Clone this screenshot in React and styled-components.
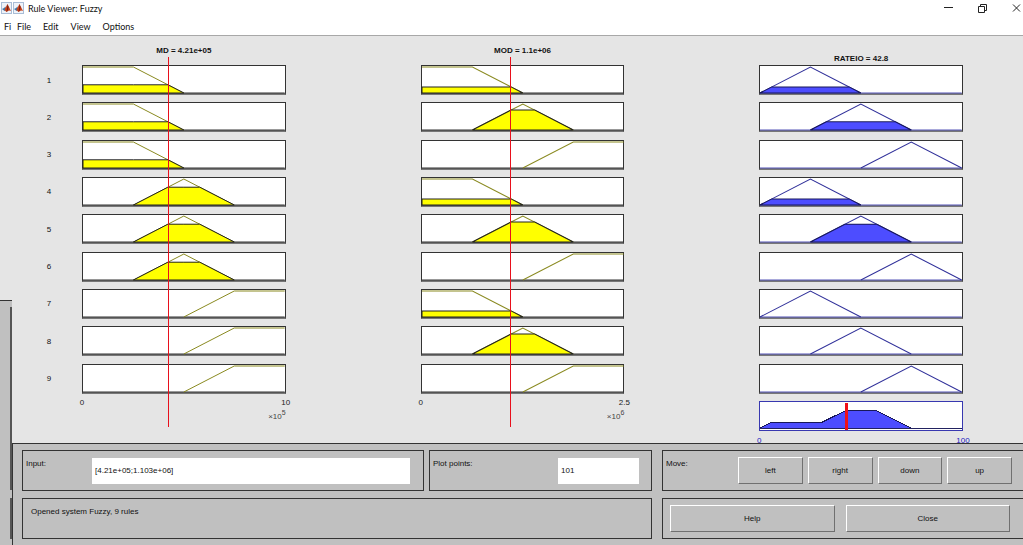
import React, { useState } from 'react';
import styled, { createGlobalStyle, css } from 'styled-components';

const GlobalStyle = createGlobalStyle`
  * {
    box-sizing: border-box;
  }
  body {
    margin: 0;
    overflow: hidden;
    background-color: #e5e5e5;
    font-family: "Liberation Sans", Arial, sans-serif;
    font-size: 8px;
    color: #111;
  }
  button,
  input {
    margin: 0;
    font: inherit;
    color: inherit;
  }
`;

const Desktop = styled.div`
  display: flex;
  height: 100vh;
  overflow: hidden;
`;

/* ---- window chrome ---- */

const WindowFrame = styled.div`
  display: flex;
  flex-direction: column;
  min-width: 0;
  background-color: #e5e5e5;
  ${props =>
    props.$behind
      ? css`
          flex: 0 0 12px;
          overflow: hidden;
        `
      : css`
          flex: 1;
        `}
`;

const TitleBar = styled.header`
  display: flex;
  align-items: center;
  flex-shrink: 0;
  height: 16px;
  padding-left: 1px;
  background-color: #fff;
  font-family: Lato, "Open Sans", sans-serif;
  font-size: 9px;
  svg {
    flex-shrink: 0;
  }
  h1 {
    flex: 1;
    margin: 0 0 0 4px;
    font-size: 9px;
    font-weight: 400;
    white-space: nowrap;
  }
`;

const WindowButtons = styled.div`
  display: flex;
  gap: 20px;
`;

const WindowButton = styled.button`
  display: flex;
  align-items: center;
  justify-content: center;
  width: 14px;
  height: 14px;
  padding: 0;
  border: 0;
  background: none;
`;

const MenuBar = styled.nav`
  display: flex;
  flex-shrink: 0;
  align-items: center;
  gap: 12px;
  height: 20px;
  padding: 2px 0 0 ${props => (props.$behind ? 4 : 5)}px;
  background-color: #fff;
  border-bottom: 1px solid #a8a8a8;
  font-family: Lato, "Open Sans", sans-serif;
  font-size: 9px;
`;

const MenuItem = styled.button`
  padding: 0;
  border: 0;
  background: none;
  white-space: nowrap;
`;

const BehindFigure = styled.div`
  flex: 1;
`;

const BehindPanel = styled.div`
  display: flex;
  flex-direction: column;
  gap: 8px;
  height: 245px;
  padding: 6px 0;
  background-color: #c0c0c0;
  border-top: 1px solid #333;
`;

const BehindBox = styled.div`
  height: ${props => props.$height}px;
  border-right: 2px solid #555;
`;

/* ---- figure ---- */

const Figure = styled.main`
  flex: 1;
  min-height: 0;
  display: grid;
  grid-template-columns: 70px 1fr 135px 1fr 135px 1fr 60px;
  overflow: hidden;
`;

const Column = styled.section`
  grid-column: ${props => props.$col};
  display: flex;
  flex-direction: column;
  min-width: 0;
`;

const ColumnTitle = styled.h2`
  display: flex;
  align-items: ${props => (props.$low ? 'flex-end' : 'center')};
  justify-content: center;
  flex-shrink: 0;
  height: 29px;
  margin: 0;
  padding-bottom: ${props => (props.$low ? 2 : 0)}px;
  font-size: 8px;
  font-weight: 700;
  white-space: nowrap;
`;

const Stack = styled.div`
  position: relative;
  flex: 1;
  display: flex;
  flex-direction: column;
  justify-content: space-between;
  margin-bottom: 12px;
`;

const RuleNumber = styled.div`
  display: flex;
  align-items: center;
  justify-content: center;
  height: 30px;
  padding-left: 4px;
`;

const PlotBox = styled.div`
  height: 30px;
  padding-top: 1px;
  background-color: #fff;
  border: 1px solid ${props => (props.$result ? '#3838b0' : '#333')};
  border-bottom: ${props => (props.$result ? '1px solid #3838b0' : '2px solid #777')};
  svg {
    display: block;
    width: 100%;
    height: ${props => (props.$result ? 25 : 26)}px;
    overflow: visible;
    shape-rendering: crispEdges;
  }
  path {
    vector-effect: non-scaling-stroke;
  }
`;

const Axis = styled.div`
  height: 34px;
  margin-top: -4px;
`;

const AxisEnds = styled.div`
  display: flex;
  justify-content: space-between;
  margin: 0 -20px;
  line-height: 12px;
  color: ${props => (props.$blue ? '#2020c0' : '#222')};
  span {
    width: 40px;
    text-align: center;
  }
`;

const Exponent = styled.div`
  line-height: 12px;
  text-align: right;
  color: #444;
  sup {
    font-size: 7px;
    line-height: 1;
  }
`;

const OutputAxis = styled.div`
  position: absolute;
  top: 100%;
  left: 0;
  right: 0;
  padding-top: 4px;
`;

const InputLine = styled.div`
  position: absolute;
  top: -8px;
  bottom: 4px;
  width: 1px;
  background-color: #e8101c;
`;

const OutputLine = styled.div`
  position: absolute;
  bottom: 1px;
  width: 3px;
  height: 27px;
  margin-left: -1px;
  background-color: #f01018;
`;

/* ---- controls ---- */

const Controls = styled.footer`
  flex-shrink: 0;
  display: grid;
  grid-template-columns: 402fr 228fr 371fr;
  grid-template-rows: 41px 41px;
  row-gap: 7px;
  padding: 6px 0 6px 9px;
  background-color: #c0c0c0;
  border-top: 1px solid #333;
  border-left: 1px solid #333;
`;

const Panel = styled.div`
  display: flex;
  align-items: center;
  min-width: 0;
  border: 1px solid #333;
  ${props =>
    props.$open
      ? css`
          border-right: 0;
          margin-left: 10px;
        `
      : ''}
`;

const InputPanel = styled(Panel)`
  padding: 0 13px 0 3px;
  label {
    align-self: flex-start;
    width: 66px;
    padding-top: 8px;
  }
`;

const PointsPanel = styled(Panel)`
  justify-content: space-between;
  margin-left: 5px;
  padding: 0 12px 0 3px;
  label {
    align-self: flex-start;
    padding-top: 8px;
  }
`;

const StatusPanel = styled(Panel)`
  grid-column: 1 / 3;
  align-items: flex-start;
  padding: 8px;
`;

const MovePanel = styled(Panel)`
  padding: 0 11px 0 3px;
`;

const MoveLabel = styled.span`
  align-self: flex-start;
  width: 72px;
  padding-top: 8px;
`;

const MoveButtons = styled.div`
  flex: 1;
  display: flex;
  gap: 5px;
`;

const ActionPanel = styled(Panel)`
  gap: 11px;
  padding: 0 13px 0 7px;
`;

const TextField = styled.input`
  ${props => (props.$width ? `width: ${props.$width}px;` : 'flex: 1; min-width: 0;')}
  height: 26px;
  padding: 0 3px;
  border: 0;
  border-radius: 0;
  background-color: #fff;
`;

const PushButton = styled.button`
  flex: 1;
  height: 27px;
  padding: 0;
  background-color: #c0c0c0;
  border: 1px solid;
  border-color: #fff #707070 #707070 #fff;
  border-radius: 0;
`;

/* membership functions, as [x, degree] points on a 0..100 axis */
const LOW = [[0, 1], [25, 1], [50, 0]];
const MID = [[25, 0], [50, 1], [75, 0]];
const HIGH = [[50, 0], [75, 1], [100, 1]];
const OUT_LOW = [[0, 0], [25, 1], [50, 0]];
const OUT_HIGH = [[50, 0], [75, 1], [100, 0]];

const MD = { name: 'MD', value: '4.21e+05', pos: 42.1, max: '10', exp: 5 };
const MOD = { name: 'MOD', value: '1.1e+06', pos: 44.1, max: '2.5', exp: 6 };

const mdRules = [
  [LOW, 0.316], [LOW, 0.316], [LOW, 0.316],
  [MID, 0.684], [MID, 0.684], [MID, 0.684],
  [HIGH, 0], [HIGH, 0], [HIGH, 0]
];
const modRules = [
  [LOW, 0.235], [MID, 0.765], [HIGH, 0],
  [LOW, 0.235], [MID, 0.765], [HIGH, 0],
  [LOW, 0.235], [MID, 0.765], [HIGH, 0]
];
const outRules = [
  [OUT_LOW, 0.235], [MID, 0.316], [OUT_HIGH, 0],
  [OUT_LOW, 0.235], [MID, 0.684], [OUT_HIGH, 0],
  [OUT_LOW, 0], [MID, 0], [OUT_HIGH, 0]
];
const RESULT = [[0, 0], [5.9, 0.235], [30.9, 0.235], [42.1, 0.684], [57.9, 0.684], [75, 0]];

const toPath = points =>
  points.map(([x, y], i) => `${i ? 'L' : 'M'}${x} ${100 - y * 100}`).join(' ');

// cuts the curve off at the firing level
function clip(points, level) {
  const out = [];
  points.forEach(([x, y], i) => {
    const prev = points[i - 1];
    if (prev && (prev[1] - level) * (y - level) < 0) {
      const t = (level - prev[1]) / (y - prev[1]);
      out.push([prev[0] + t * (x - prev[0]), level]);
    }
    out.push([x, Math.min(y, level)]);
  });
  return out;
}

function RulePlot({ shape, level, output }) {
  return (
    <PlotBox>
      <svg viewBox="0 0 100 100" preserveAspectRatio="none" aria-hidden="true">
        <path d="M0 100H100" stroke={output ? '#5555b8' : '#333'} fill="none" />
        <path d={toPath(shape)} stroke={output ? '#30309a' : '#8a8a20'} fill="none" />
        {level > 0 && (
          <path
            d={`${toPath(clip(shape, level))} ${shape[0][1] > 0 ? 'L0 100Z' : 'Z'}`}
            fill={output ? '#4d4dff' : '#ffff00'}
            stroke={output ? '#18185a' : '#222'}
          />
        )}
      </svg>
    </PlotBox>
  );
}

function InputColumn({ col, input, rules }) {
  return (
    <Column $col={col}>
      <ColumnTitle>{input.name} = {input.value}</ColumnTitle>
      <Stack>
        {rules.map(([shape, level], i) => (
          <RulePlot key={i} shape={shape} level={level} />
        ))}
        <Axis>
          <AxisEnds>
            <span>0</span>
            <span>{input.max}</span>
          </AxisEnds>
          <Exponent>×10<sup>{input.exp}</sup></Exponent>
        </Axis>
        <InputLine style={{ left: `${input.pos}%` }} />
      </Stack>
    </Column>
  );
}

function OutputColumn() {
  return (
    <Column $col={6}>
      <ColumnTitle $low>RATEIO = 42.8</ColumnTitle>
      <Stack>
        {outRules.map(([shape, level], i) => (
          <RulePlot key={i} shape={shape} level={level} output />
        ))}
        <PlotBox $result>
          <svg viewBox="0 0 100 100" preserveAspectRatio="none" aria-hidden="true">
            <path d={`${toPath(RESULT)}Z`} fill="#4d4dff" stroke="#18185a" />
            <path d="M0 100H100" stroke="#222260" fill="none" />
          </svg>
        </PlotBox>
        <OutputLine style={{ left: '42.8%' }} />
        <OutputAxis>
          <AxisEnds $blue>
            <span>0</span>
            <span>100</span>
          </AxisEnds>
        </OutputAxis>
      </Stack>
    </Column>
  );
}

function MatlabIcon() {
  return (
    <svg width="11" height="12" viewBox="0 0 11 12" aria-hidden="true">
      <rect x="0.5" y="0.5" width="10" height="11" fill="#eef2f8" stroke="#a9bdd6" />
      <path d="M1 7l2-1 1.500-1.500L5 8 3.500 9z" fill="#3f77a8" />
      <path d="M4 6.500L6.500 2l1.500 3 2 4-2-.5L5.500 10 3.500 8z" fill="#c8451c" />
      <path d="M6.500 2l1 3-.5 3-1.500 2z" fill="#7a1e14" />
    </svg>
  );
}

export default function App() {
  const [input, setInput] = useState('[4.21e+05;1.103e+06]');
  const [points, setPoints] = useState('101');

  return (
    <Desktop>
      <GlobalStyle />
      <WindowFrame $behind aria-hidden="true">
        <TitleBar>
          <MatlabIcon />
        </TitleBar>
        <MenuBar $behind>
          <span>Fi</span>
        </MenuBar>
        <BehindFigure />
        <BehindPanel>
          <BehindBox $height={183} />
          <BehindBox $height={41} />
        </BehindPanel>
      </WindowFrame>

      <WindowFrame>
        <TitleBar>
          <MatlabIcon />
          <h1>Rule Viewer: Fuzzy</h1>
          <WindowButtons>
            <WindowButton aria-label="Minimize">
              <svg width="9" height="9" viewBox="0 0 9 9" stroke="#222" fill="none">
                <path d="M0 3.500h9" />
              </svg>
            </WindowButton>
            <WindowButton aria-label="Restore">
              <svg width="9" height="9" viewBox="0 0 9 9" stroke="#222" fill="none">
                <path d="M0.500 2.500h6v6h-6zM2.500 2.500v-2h6v6h-2" />
              </svg>
            </WindowButton>
            <WindowButton aria-label="Close window">
              <svg width="9" height="9" viewBox="0 0 9 9" stroke="#222" fill="none">
                <path d="M1 0.500l7 7M8 0.500l-7 7" />
              </svg>
            </WindowButton>
          </WindowButtons>
        </TitleBar>
        <MenuBar>
          <MenuItem>File</MenuItem>
          <MenuItem>Edit</MenuItem>
          <MenuItem>View</MenuItem>
          <MenuItem>Options</MenuItem>
        </MenuBar>

        <Figure>
          <Column $col={1}>
            <ColumnTitle as="div" />
            <Stack>
              {mdRules.map((_, i) => (
                <RuleNumber key={i}>{i + 1}</RuleNumber>
              ))}
              <RuleNumber />
            </Stack>
          </Column>
          <InputColumn col={2} input={MD} rules={mdRules} />
          <InputColumn col={4} input={MOD} rules={modRules} />
          <OutputColumn />
        </Figure>

        <Controls>
          <InputPanel>
            <label htmlFor="input">Input:</label>
            <TextField id="input" value={input} onChange={e => setInput(e.target.value)} />
          </InputPanel>
          <PointsPanel>
            <label htmlFor="points">Plot points:</label>
            <TextField
              id="points"
              $width={81}
              value={points}
              onChange={e => setPoints(e.target.value)}
            />
          </PointsPanel>
          <MovePanel $open>
            <MoveLabel id="move">Move:</MoveLabel>
            <MoveButtons role="group" aria-labelledby="move">
              <PushButton>left</PushButton>
              <PushButton>right</PushButton>
              <PushButton>down</PushButton>
              <PushButton>up</PushButton>
            </MoveButtons>
          </MovePanel>
          <StatusPanel role="status">Opened system Fuzzy, 9 rules</StatusPanel>
          <ActionPanel $open>
            <PushButton>Help</PushButton>
            <PushButton>Close</PushButton>
          </ActionPanel>
        </Controls>
      </WindowFrame>
    </Desktop>
  );
}
